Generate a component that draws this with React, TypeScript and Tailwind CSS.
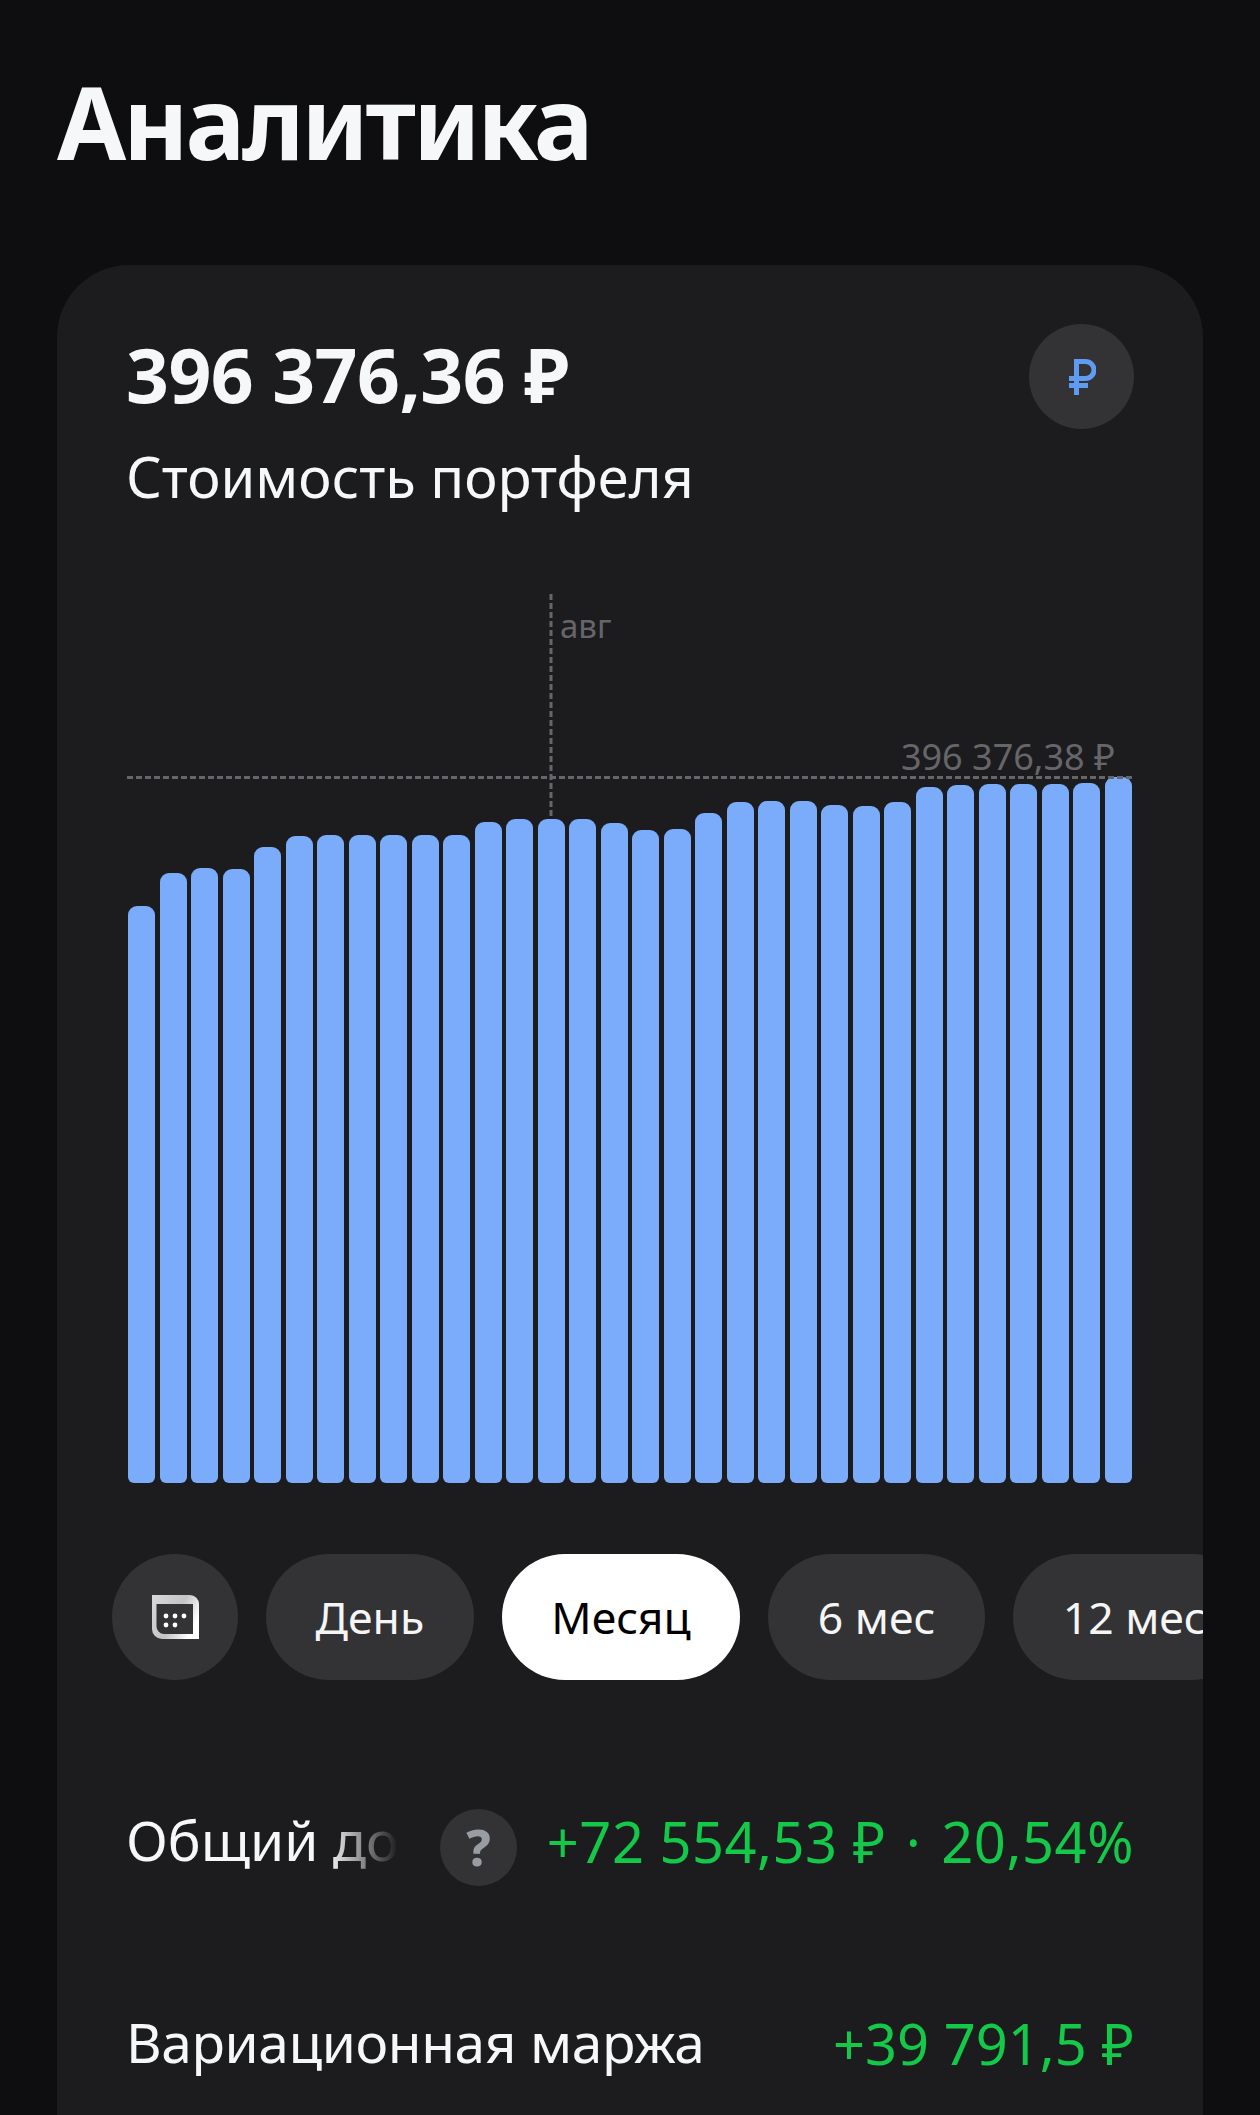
import { ReactNode } from 'react';

// y of each bar's top edge in the chart, left to right
const barTops = [
    906, 873, 868, 869, 847, 836, 835, 835, 835, 835, 835, 822, 819, 819, 819, 823, 830, 829, 813, 802, 801, 801, 805,
    806, 802, 787, 785, 784, 784, 784, 783, 777,
];
const chartBottom = 1483;
const chartHeight = 889;

function RubleIcon() {
    return (
        <svg className="ml-[2px]" width="27" height="36" viewBox="0 0 27 36" fill="none" stroke="#5f9bf0" strokeWidth="5">
            <path d="M7.5 36V2.5H16.5a8.5 8.5 0 0 1 0 17H0" />
            <path d="M0 26.5H19" />
        </svg>
    );
}

function CalendarIcon() {
    return (
        <svg width="47" height="44" viewBox="0 0 47 44">
            <defs>
                <linearGradient id="cal" x1="0" y1="0" x2="1" y2="0.5">
                    <stop offset="0" stopColor="#d9d9da" />
                    <stop offset="0.6" stopColor="#c4c4c6" />
                    <stop offset="1" stopColor="#ffffff" />
                </linearGradient>
            </defs>
            <path d="M0 0H38a9 9 0 0 1 9 9V44H10A10 10 0 0 1 0 34Z" fill="url(#cal)" />
            <path d="M4.5 9H41V39H12A7.5 7.5 0 0 1 4.5 31.5Z" fill="#333336" />
            {[14, 23, 32].map((x) => (
                <circle key={x} cx={x} cy="21" r="2.4" fill="#fff" />
            ))}
            {[14, 23].map((x) => (
                <circle key={x} cx={x} cy="30" r="2.4" fill="#fff" />
            ))}
        </svg>
    );
}

function Pill({ children, active }: { children: ReactNode; active?: boolean }) {
    return (
        <div
            className={`h-[126px] shrink-0 rounded-full px-[49.6px] flex items-center text-[44.5px] ${active ? 'bg-white text-black' : 'bg-[#333336] text-[#f5f5f6]'
                }`}
        >
            {children}
        </div>
    );
}

export default function App() {
    return (
        <div className="w-[1260px] h-[2115px] overflow-hidden bg-[#0e0e10] font-['Noto_Sans',sans-serif] text-[#f6f7f8]">
            <h1 className="pl-[57px] pt-[71px] h-[265px] text-[100px] leading-[100px] font-bold tracking-[-3.1px]">Аналитика</h1>

            <div className="mx-[57px] h-[1850px] rounded-t-[72px] bg-[#1c1c1e] pl-[69px] pr-[69px] pt-[59px]">
                <div className="flex justify-between items-start">
                    <div className="pt-[10px]">
                        <div className="text-[75px] leading-[80px] font-bold tracking-[-0.5px]">396 376,36 ₽</div>
                        <div className="mt-[27px] text-[56px] leading-[70px]">Стоимость портфеля</div>
                    </div>
                    <div className="w-[105px] h-[105px] rounded-full bg-[#333336] flex items-center justify-center">
                        <RubleIcon />
                    </div>
                </div>

                {/* Chart */}
                <div className="relative mt-[83px] mx-[1px] h-[889px] flex items-end justify-between px-[1px]">
                    {barTops.map((top, i) => (
                        <div
                            key={i}
                            className="w-[27px] rounded-t-[9px] rounded-b-[6px] bg-[#7aacfb]"
                            style={{ height: chartBottom - top }}
                        />
                    ))}
                    <svg className="absolute left-0 top-0" width="1006" height={chartHeight} fill="none" stroke="#66666a" strokeWidth="3">
                        <path d="M0 183.5H1006" strokeDasharray="6 3" />
                        <path d="M424 0V225" strokeDasharray="6 3" />
                    </svg>
                    <span className="absolute left-[433px] top-[12px] text-[33px] leading-[40px] text-[#66666a]">авг</span>
                    <span className="absolute right-[18px] top-[140px] text-[36px] leading-[46px] text-[#66666a]">396 376,38 ₽</span>
                </div>

                {/* Period switcher */}
                <div className="mt-[71px] ml-[-14px] mr-[-69px] flex gap-[28px] overflow-hidden">
                    <div className="w-[126px] h-[126px] shrink-0 rounded-full bg-[#333336] flex items-center justify-center">
                        <CalendarIcon />
                    </div>
                    <Pill>День</Pill>
                    <Pill active>Месяц</Pill>
                    <Pill>6 мес</Pill>
                    <Pill>12 мес</Pill>
                </div>

                <div className="mt-[129px] h-[77px] flex items-center text-[55px]">
                    <div className="relative w-[272px] mb-[14px] overflow-hidden whitespace-nowrap">
                        Общий доход
                        <div className="absolute right-0 top-0 bottom-0 w-[70px] bg-linear-to-l from-[#1c1c1e] to-transparent" />
                    </div>
                    <div className="ml-[42px] w-[77px] h-[77px] rounded-full bg-[#333336] flex items-center justify-center text-[50px] font-extrabold text-[#9a9ca3]">
                        ?
                    </div>
                    <div className="ml-auto mb-[14px] flex text-[56px] tracking-[0.5px] text-[#14c94a] whitespace-nowrap">
                        <span>+72 554,53 ₽</span>
                        <span className="mx-[20px]">·</span>
                        <span>20,54%</span>
                    </div>
                </div>

                <div className="mt-[125px] h-[77px] flex items-center justify-between text-[55px] tracking-[-0.4px]">
                    <div className="mb-[14px]">Вариационная маржа</div>
                    <div className="mb-[14px] text-[56px] tracking-normal text-[#14c94a]">+39 791,5 ₽</div>
                </div>
            </div>
        </div>
    );
}
